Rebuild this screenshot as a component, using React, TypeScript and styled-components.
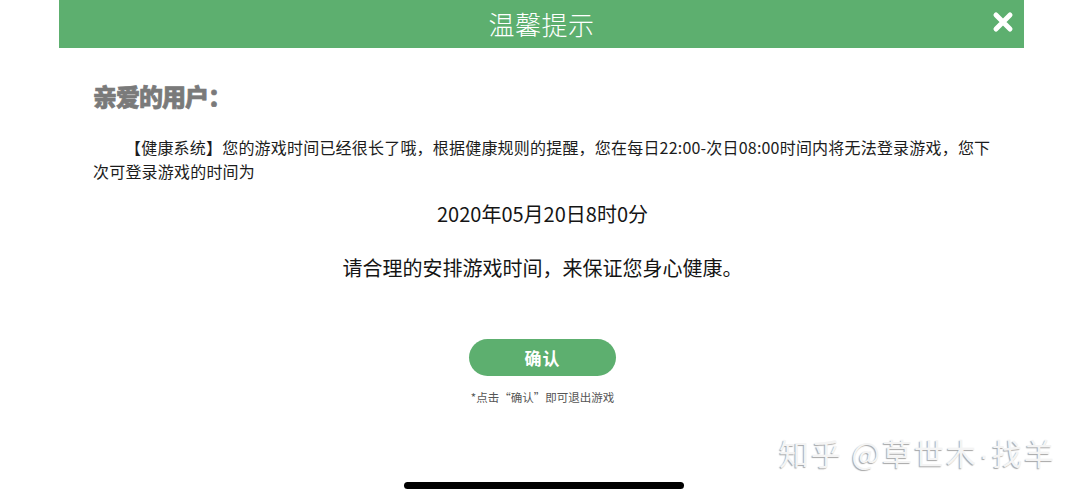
import React from "react";
import styled, { createGlobalStyle } from "styled-components";

const GlobalStyle = createGlobalStyle`
  html, body {
    margin: 0;
    padding: 0;
    background: #ffffff;
  }
  body {
    font-family: "Noto Sans CJK SC", "Noto Sans", sans-serif;
    color: #222222;
  }
`;

const Page = styled.div`
  position: relative;
  width: 100%;
  height: 500px;
  overflow: hidden;
  background: #ffffff;
`;

const Dialog = styled.div`
  width: 965px;
  margin: 0 auto;
  display: flex;
  flex-direction: column;
`;

const Header = styled.div`
  height: 48px;
  background: #5daf6f;
  display: grid;
  grid-template-columns: 1fr auto 1fr;
  align-items: center;
`;

const Title = styled.div`
  grid-column: 2;
  color: #ffffff;
  font-size: 26px;
  font-weight: 300;
  letter-spacing: 0.5px;
  line-height: 48px;
`;

const Close = styled.button`
  grid-column: 3;
  justify-self: end;
  margin-right: 10px;
  margin-top: -4px;
  width: 23px;
  height: 23px;
  padding: 0;
  border: 0;
  background: none;
  display: flex;
  align-items: center;
  justify-content: center;
  cursor: pointer;
`;

const Body = styled.div`
  padding: 32px 32px 0 34px;
  display: flex;
  flex-direction: column;
`;

const Greeting = styled.div`
  font-size: 24px;
  line-height: 32px;
  font-weight: 900;
  color: #7a7a7a;
  letter-spacing: -1px;
  -webkit-text-stroke: 0.7px #7a7a7a;
`;

const Paragraph = styled.p`
  margin: 23px 0 0;
  font-size: 16px;
  line-height: 24px;
  letter-spacing: 0.2px;
  text-indent: 2em;
  color: #1c1c1c;
`;

const Centered = styled.div<{ $gap: number }>`
  margin-top: ${(p) => p.$gap}px;
  text-align: center;
  font-size: 20px;
  line-height: 28px;
  color: #151515;
`;

const Actions = styled.div`
  margin-top: 57px;
  display: flex;
  flex-direction: column;
  align-items: center;
  gap: 13px;
`;

const ConfirmButton = styled.button`
  width: 147px;
  height: 37px;
  border: 0;
  border-radius: 19px;
  background: #5daf6f;
  color: #ffffff;
  font-family: inherit;
  font-size: 17px;
  font-weight: 700;
  letter-spacing: 1px;
  cursor: pointer;
`;

const Note = styled.div`
  font-size: 11.5px;
  line-height: 16px;
  color: #555555;
`;

const Watermark = styled.div`
  position: absolute;
  right: 27px;
  bottom: 27px;
  font-size: 30px;
  line-height: 36px;
  letter-spacing: 2px;
  color: #f4f4f4;
  text-shadow: -1px 1px 1px rgba(0, 0, 0, 0.35);
  white-space: nowrap;
`;

const Dot = styled.span`
  font-family: "Liberation Sans", sans-serif;
  margin: 0 1px;
`;

const HomeIndicator = styled.div`
  position: absolute;
  left: 50%;
  bottom: 11px;
  width: 280px;
  height: 7px;
  margin-left: -138px;
  border-radius: 4px;
  background: #000000;
`;

function CloseIcon() {
  return (
    <svg width="22" height="22" viewBox="0 0 22 22">
      <path
        d="M4 4 L18 18 M18 4 L4 18"
        stroke="#ffffff"
        strokeWidth="5"
        strokeLinecap="round"
      />
    </svg>
  );
}

export default function App() {
  return (
    <Page>
      <GlobalStyle />
      <Dialog>
        <Header>
          <Title>温馨提示</Title>
          <Close aria-label="关闭">
            <CloseIcon />
          </Close>
        </Header>
        <Body>
          <Greeting>亲爱的用户：</Greeting>
          <Paragraph>
            【健康系统】您的游戏时间已经很长了哦，根据健康规则的提醒，您在每日22:00-次日08:00时间内将无法登录游戏，您下次可登录游戏的时间为
          </Paragraph>
          <Centered $gap={17}>2020年05月20日8时0分</Centered>
          <Centered $gap={26}>请合理的安排游戏时间，来保证您身心健康。</Centered>
          <Actions>
            <ConfirmButton>确认</ConfirmButton>
            <Note>*点击“确认”即可退出游戏</Note>
          </Actions>
        </Body>
      </Dialog>
      <Watermark>
        知乎 @草世木<Dot>·</Dot>找羊
      </Watermark>
      <HomeIndicator />
    </Page>
  );
}
